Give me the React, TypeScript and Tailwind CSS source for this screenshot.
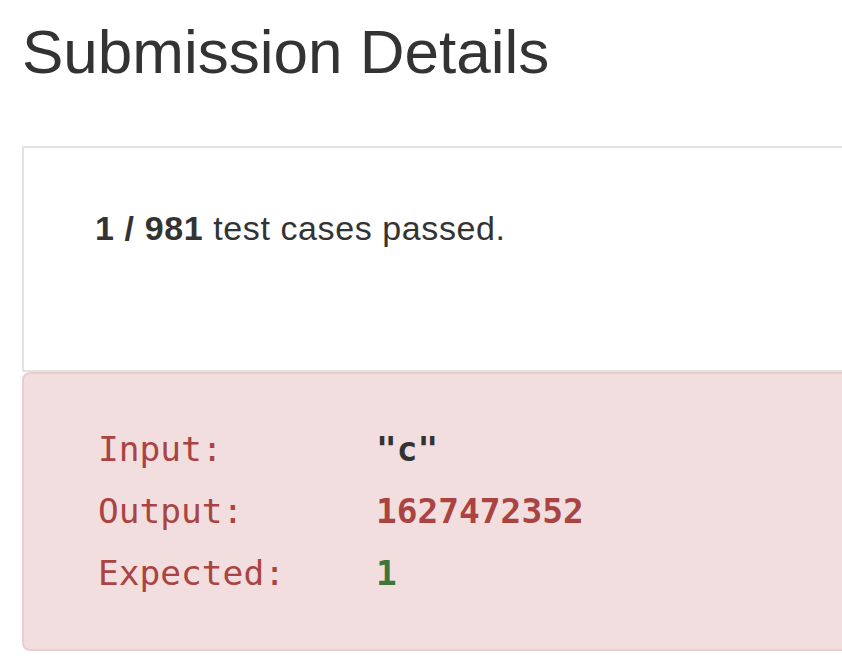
export default function App() {
  const rows = [
    { label: "Input:", value: '"c"', cls: "text-[#333333]" },
    { label: "Output:", value: "1627472352", cls: "text-[#a94442]" },
    { label: "Expected:", value: "1", cls: "text-[#3c763d]" },
  ];

  return (
    <div className="h-[670px] w-[842px] overflow-hidden bg-white font-['Liberation_Sans',Arial,sans-serif] text-[#333333]">
      <div className="pl-[22px]">
        <h2 className="pt-[12px] text-[62px] leading-[80px] font-normal">Submission Details</h2>

        <div className="mt-[54px] w-[860px] border-2 border-[#e3e3e3] bg-white px-[71px] pt-[60px] pb-[122px]">
          <p className="text-[34px] leading-[40px] tracking-[0.6px]">
            <b>1 / 981</b> test cases passed.
          </p>
        </div>

        <div className="h-[279px] w-[860px] rounded-[8px] border-2 border-[#ebccd1] bg-[#f2dede] px-[74px] pt-[44px] font-['DejaVu_Sans_Mono',monospace] text-[34.5px] leading-[62px]">
          {rows.map((row) => (
            <div key={row.label} className="flex">
              <span className="w-[278px] text-[#a94442]">{row.label}</span>
              <span className={`font-bold ${row.cls}`}>{row.value}</span>
            </div>
          ))}
        </div>
      </div>
    </div>
  );
}
